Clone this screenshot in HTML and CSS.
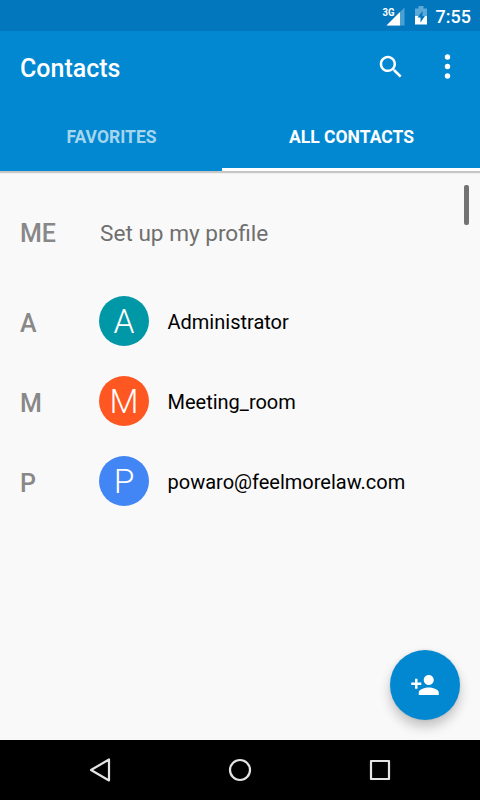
FILE: index.html
```
<!DOCTYPE html>
<html lang="en">
<head>
  <meta charset="UTF-8">
  <meta name="viewport" content="width=device-width, initial-scale=1.0">
  <title>Contacts</title>
  <link rel="stylesheet" href="styles.css">
</head>
<body>
  <div class="screen">
    <!-- Status bar -->
    <div class="status-bar">
      <svg class="signal" width="24" height="20" viewBox="0 0 24 20">
        <path d="M23.500 1.500v18H5.500z" fill="#4ba0d2"/>
        <path d="M19 6v13.500H5.500z" fill="#fff"/>
        <text x="1.500" y="9.800" textLength="12" lengthAdjust="spacingAndGlyphs">3G</text>
      </svg>
      <svg class="battery" width="12" height="19" viewBox="0 0 12 19">
        <path d="M0 2.500h3.500V0h5v2.500H12V10H0z" fill="#5ba9d6"/>
        <path d="M0 10h12v8.500H0z" fill="#fff"/>
        <path d="M7.500 5L2.500 11.500h3V16.500L10 10H7.500z" fill="#0277bd"/>
      </svg>
      <span class="clock">7:55</span>
    </div>

    <!-- Toolbar and tabs -->
    <header class="header">
      <div class="toolbar">
        <h1>Contacts</h1>
        <svg class="search" width="30" height="30" viewBox="0 0 24 24" fill="#fff">
          <path d="M15.500 14h-.79l-.28-.27C15.410 12.590 16 11.110 16 9.500 16 5.910 13.090 3 9.500 3S3 5.910 3 9.500 5.910 16 9.500 16c1.610 0 3.090-.59 4.230-1.570l.27.28v.79l5 4.990L20.490 19l-4.990-5zm-6 0C7.010 14 5 11.990 5 9.500S7.010 5 9.500 5 14 7.010 14 9.500 11.990 14 9.500 14z"/>
        </svg>
        <svg class="more" width="7" height="26" viewBox="0 0 7 26" fill="#fff">
          <circle cx="3.500" cy="3" r="2.700"/>
          <circle cx="3.500" cy="12.500" r="2.700"/>
          <circle cx="3.500" cy="22" r="2.700"/>
        </svg>
      </div>
      <nav class="tabs">
        <div class="tab">FAVORITES</div>
        <div class="tab active">ALL CONTACTS</div>
      </nav>
    </header>

    <!-- Contact list -->
    <main class="list">
      <div class="row profile">
        <span class="section">ME</span>
        <span class="setup">Set up my profile</span>
      </div>
      <div class="row">
        <span class="section">A</span>
        <span class="avatar teal">A</span>
        <span class="name">Administrator</span>
      </div>
      <div class="row">
        <span class="section">M</span>
        <span class="avatar orange">M</span>
        <span class="name">Meeting_room</span>
      </div>
      <div class="row">
        <span class="section">P</span>
        <span class="avatar blue">P</span>
        <span class="name">powaro@feelmorelaw.com</span>
      </div>
      <div class="scrollbar"></div>
      <div class="fab">
        <svg width="30" height="30" viewBox="0 0 24 24" fill="#fff">
          <path d="M15 12c2.210 0 4-1.790 4-4s-1.790-4-4-4-4 1.790-4 4 1.790 4 4 4zm-9-2V7H4v3H1v2h3v3h2v-3h3v-2H6zm9 4c-2.670 0-8 1.340-8 4v2h16v-2c0-2.660-5.330-4-8-4z"/>
        </svg>
      </div>
    </main>

    <!-- Navigation bar -->
    <footer class="nav-bar">
      <svg width="30" height="30" viewBox="0 0 30 30">
        <path d="M24 4.500v21L6 15z"/>
      </svg>
      <svg width="30" height="30" viewBox="0 0 30 30">
        <circle cx="15" cy="15" r="10"/>
      </svg>
      <svg width="30" height="30" viewBox="0 0 30 30">
        <rect x="6" y="6" width="18" height="18"/>
      </svg>
    </footer>
  </div>
</body>
</html>
```
FILE: styles.css
```
* {
  margin: 0;
  padding: 0;
  box-sizing: border-box;
}
body {
  font-family: Roboto, sans-serif;
  background: #f9f9f9;
}
svg {
  display: block;
  flex: none;
}
.screen {
  width: 480px;
  height: 800px;
  display: flex;
  flex-direction: column;
  overflow: hidden;
}

/* Status bar */
.status-bar {
  height: 31px;
  display: flex;
  align-items: center;
  justify-content: flex-end;
  padding-right: 9px;
  background: #0277bd;
  color: #fff;
}
.signal {
  margin-right: 10px;
}
.signal text {
  font-size: 11.5px;
  font-weight: 700;
  fill: #fff;
}
.battery {
  margin-right: 9px;
}
.clock {
  font-size: 18px;
  font-weight: 500;
  padding-top: 2px;
}

/* Toolbar and tabs */
.header {
  height: 140px;
  display: flex;
  flex-direction: column;
  background: #0288d1;
  color: #fff;
  box-shadow: 0 2px 1px rgba(0, 0, 0, 0.2);
  z-index: 1;
}
.toolbar {
  height: 71px;
  display: flex;
  align-items: center;
  padding: 0 29px 0 20px;
}
.toolbar h1 {
  flex: 1;
  font-size: 25px;
  font-weight: 500;
  line-height: 30px;
  padding-top: 4px;
}
.search {
  margin-right: 38px;
}
.tabs {
  flex: 1;
  display: grid;
  grid-template-columns: 222px 258px;
}
.tab {
  padding: 24px 0 0 1px;
  font-size: 17.5px;
  line-height: 22px;
  font-weight: 700;
  text-align: center;
  color: #a6d5ee;
}
.tab.active {
  color: #fff;
  border-bottom: 3px solid #fff;
}

/* Contact list */
.list {
  flex: 1;
  position: relative;
  background: #f9f9f9;
}
.row {
  height: 80px;
  display: flex;
  align-items: center;
  padding-left: 20px;
}
.row.profile {
  height: 110px;
  padding-top: 10px;
}
.section {
  width: 79px;
  font-size: 25px;
  font-weight: 500;
  color: #888;
  padding-top: 4px;
}
.setup {
  font-size: 22.6px;
  color: #6f6f6f;
  padding-left: 1px;
  padding-top: 5px;
}
.avatar {
  width: 50px;
  height: 50px;
  border-radius: 50%;
  font-size: 33.5px;
  font-weight: 300;
  line-height: 52px;
  text-align: center;
  color: #fff;
}
.teal { background: #0097a7; }
.orange { background: #ff5722; }
.blue { background: #4285f4; }
.name {
  margin-left: 18.5px;
  padding-top: 2px;
  font-size: 20px;
  color: #000;
}
.scrollbar {
  position: absolute;
  top: 14px;
  right: 11px;
  width: 5px;
  height: 40px;
  border-radius: 2px;
  background: #737373;
}
.fab {
  position: absolute;
  right: 20px;
  bottom: 20px;
  width: 70px;
  height: 70px;
  border-radius: 50%;
  display: flex;
  align-items: center;
  justify-content: center;
  background: #0288d1;
  box-shadow: 0 7px 12px rgba(0, 0, 0, 0.22), 0 0 3px rgba(0, 0, 0, 0.1);
}

/* Navigation bar */
.nav-bar {
  height: 60px;
  display: flex;
  align-items: center;
  justify-content: center;
  gap: 110px;
  background: #000;
}
.nav-bar svg {
  fill: none;
  stroke: #e4e4e4;
  stroke-width: 2.2;
  stroke-linejoin: round;
}
```
